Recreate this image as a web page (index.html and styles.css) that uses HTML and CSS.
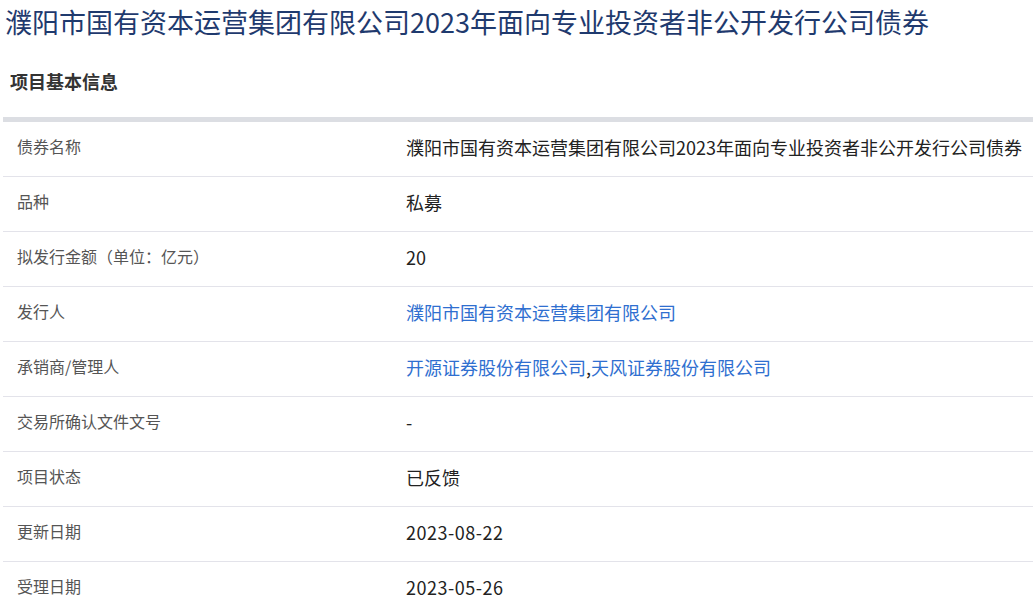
FILE: index.html
```html
<!DOCTYPE html>
<html lang="zh-CN">
<head>
<meta charset="utf-8">
<title>债券项目信息</title>
<link rel="stylesheet" href="styles.css">
</head>
<body>
<h1 class="title">濮阳市国有资本运营集团有限公司2023年面向专业投资者非公开发行公司债券</h1>
<h2 class="section-title">项目基本信息</h2>
<div class="info-table">
  <div class="row"><div class="label">债券名称</div><div class="value">濮阳市国有资本运营集团有限公司2023年面向专业投资者非公开发行公司债券</div></div>
  <div class="row"><div class="label">品种</div><div class="value">私募</div></div>
  <div class="row"><div class="label">拟发行金额（单位：亿元）</div><div class="value">20</div></div>
  <div class="row"><div class="label">发行人</div><div class="value"><a class="link" href="#">濮阳市国有资本运营集团有限公司</a></div></div>
  <div class="row"><div class="label">承销商/管理人</div><div class="value"><a class="link" href="#">开源证券股份有限公司</a>,<a class="link" href="#">天风证券股份有限公司</a></div></div>
  <div class="row"><div class="label">交易所确认文件文号</div><div class="value">-</div></div>
  <div class="row"><div class="label">项目状态</div><div class="value">已反馈</div></div>
  <div class="row"><div class="label">更新日期</div><div class="value date">2023-08-22</div></div>
  <div class="row"><div class="label">受理日期</div><div class="value date">2023-05-26</div></div>
</div>
</body>
</html>
```

FILE: styles.css
```css
html, body {
  margin: 0;
  padding: 0;
  background: #ffffff;
}

body {
  font-family: "Noto Sans CJK SC", "Noto Sans", sans-serif;
  overflow: hidden;
}

.title {
  margin: 0;
  padding-left: 5px;
  font-size: 27px;
  font-weight: normal;
  line-height: 44px;
  color: #1f3a6e;
  white-space: nowrap;
}

.section-title {
  margin: 25px 0 24px 10px;
  font-size: 18px;
  font-weight: bold;
  line-height: 24px;
  color: #333333;
}

.info-table {
  margin-left: 3px;
  border-top: 5px solid #dcdee3;
}

.row {
  display: grid;
  grid-template-columns: 403px 1fr;
  align-items: center;
  box-sizing: border-box;
  height: 55px;
  padding-bottom: 4px;
  border-bottom: 1px solid #e3e3ea;
}

.label {
  padding-left: 14px;
  padding-bottom: 2px;
  font-size: 16px;
  line-height: 24px;
  color: #555555;
  white-space: nowrap;
}

.value {
  font-size: 18px;
  line-height: 26px;
  color: #222222;
  white-space: nowrap;
}

.date {
  letter-spacing: 0.5px;
}

.link {
  color: #2f6fd0;
  text-decoration: none;
}
```
